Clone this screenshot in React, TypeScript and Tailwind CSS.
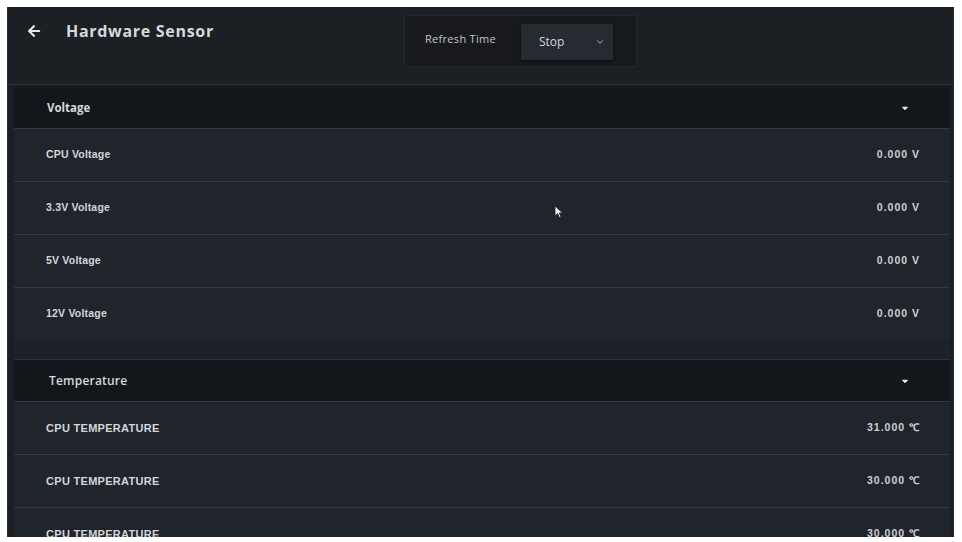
import { FaArrowLeft, FaCaretDown } from "react-icons/fa";
import { ChevronDown } from "lucide-react";

type Row = { label: string; value: string };

const VOLTAGE: Row[] = [
    { label: "CPU Voltage", value: "0.000 V" },
    { label: "3.3V Voltage", value: "0.000 V" },
    { label: "5V Voltage", value: "0.000 V" },
    { label: "12V Voltage", value: "0.000 V" },
];

const TEMPERATURE: Row[] = [
    { label: "CPU TEMPERATURE", value: "31.000 ℃" },
    { label: "CPU TEMPERATURE", value: "30.000 ℃" },
    { label: "CPU TEMPERATURE", value: "30.000 ℃" },
];

const FONT = { fontFamily: '"Open Sans", "Liberation Sans", sans-serif' };
const ARIAL = { fontFamily: '"Liberation Sans", Arial, sans-serif' };

export default function App() {
    return (
        <div className="w-[962px] h-[542px] bg-white pt-[7px] pl-[7px] pr-[8px] pb-[5px]" style={FONT}>
            <div className="relative h-full w-full overflow-hidden bg-[#1b1e23] border-l border-r border-[#2a2d31]">
                {/* header */}
                <div className="flex h-[78px] border-b border-[#2c3037] bg-[#1c1f24]">
                    <div className="flex w-[396px] items-start pt-[12px] pl-[19px]">
                        <FaArrowLeft className="mt-[5px] text-[#e4e6ea]" size={14} />
                        <div className="ml-[25px] text-[16px] font-bold tracking-[0.7px] text-[#d6d8dc]">
                            Hardware Sensor
                        </div>
                    </div>
                    <div className="mt-[8px] flex h-[52px] w-[233px] items-center border border-[#25282d] bg-[#17191d] pl-[20px] pb-[3px]">
                        <span className="text-[11px] tracking-[0.3px] text-[#c3c6cb]">Refresh Time</span>
                        <div className="ml-[25px] mt-[4px] flex h-[36px] w-[92px] items-center justify-between bg-[#262a31] pl-[18px] pr-[8px] shadow-[0_1px_2px_rgba(0,0,0,0.6)]">
                            <span className="text-[12px] text-[#d4d7dc]">Stop</span>
                            <ChevronDown size={10} strokeWidth={2.5} className="text-[#9aa0a8]" />
                        </div>
                    </div>
                </div>

                <div className="pl-[6px] pr-[3px] pt-[2px]">
                    <Section title="Voltage" rows={VOLTAGE} titleClass="font-bold text-[11.5px] pl-[33px]" />
                    <div className="h-[20px] border-b border-[#2f343c] bg-[#1d2128]" />
                    <Section title="Temperature" rows={TEMPERATURE} upper titleClass="font-semibold text-[12px] tracking-[0.2px] pl-[35px]" />
                </div>

                {/* mouse cursor */}
                <svg className="absolute left-[546px] top-[198px]" width="10" height="14" viewBox="0 0 10 14">
                    <path d="M1 1 L1 11 L3.6 8.6 L5.4 12.6 L7 11.9 L5.3 8 L8.6 8 Z" fill="#f2f2f2" stroke="#222" strokeWidth="0.8" />
                </svg>
            </div>
        </div>
    );
}

function Section({
                     title,
                     rows,
                     upper,
                     titleClass,
                 }: {
    title: string;
    rows: Row[];
    upper?: boolean;
    titleClass: string;
}) {
    return (
        <div>
            <div className="flex h-[41px] items-center justify-between bg-[#13161a] pr-[40px]">
                <span className={`${titleClass} text-[#d6d8dc]`}>{title}</span>
                <FaCaretDown size={10} className="text-[#e3e5e8]" />
            </div>
            {rows.map((r, i) => (
                <div
                    key={i}
                    className="flex h-[53px] items-center justify-between border-t border-[#353a42] bg-[#20242b] pl-[32px] pr-[30px]"
                    style={ARIAL}
                >
                    <span className={`font-bold text-[#d3d6db] ${upper ? "text-[11px] tracking-[0.3px]" : "text-[10.5px] tracking-[0.2px]"}`}>
                        {r.label}
                    </span>
                    <span className="text-[10.5px] font-bold tracking-[1px] text-[#cdd0d5]">{r.value}</span>
                </div>
            ))}
        </div>
    );
}
